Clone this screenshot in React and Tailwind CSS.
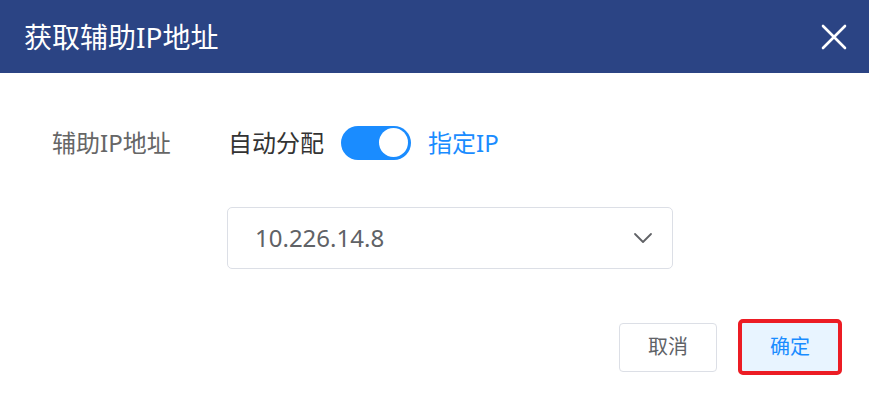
import { useState } from 'react';

const font = { fontFamily: '"Noto Sans", "Noto Sans CJK SC", sans-serif' };

export default function App() {
  const [manual, setManual] = useState(true);

  return (
    <div className="h-[404px] w-[869px] bg-white" style={font}>
      <header className="flex h-[73px] items-center justify-between bg-[#2b4484] pl-6 pr-[19px]">
        <h1 className="text-[28px] font-normal leading-none text-white">获取辅助IP地址</h1>
        <button className="flex h-8 w-8 items-center justify-center text-white">
          <svg width="26" height="26" viewBox="0 0 26 26" fill="none" stroke="currentColor" strokeWidth="2.6" strokeLinecap="round">
            <path d="M2 2 L24 24 M24 2 L2 24" />
          </svg>
        </button>
      </header>

      <div className="pl-[52px] pt-[52px]">
        <div className="flex h-[35px] items-center">
          <span className="w-[176px] text-[24px] text-[#666]">辅助IP地址</span>
          <span className="text-[24px] text-[#333]">自动分配</span>
          <button
            onClick={() => setManual(!manual)}
            className={`ml-[17px] flex h-[34px] w-[70px] items-center rounded-full px-[3px] ${manual ? 'justify-end bg-[#1a8cff]' : 'justify-start bg-[#c0c4cc]'}`}
          >
            <span className="h-[29px] w-[29px] rounded-full bg-white" />
          </button>
          <span className="ml-[17px] text-[24px] text-[#1a8cff]">指定IP</span>
        </div>

        <div className="mt-[47px] flex h-[62px] w-[446px] items-center justify-between rounded-[5px] border border-[#dcdfe6] pl-[27px] pr-[19px] ml-[175px]">
          <span className="text-[24px] text-[#606266]">10.226.14.8</span>
          <svg width="20" height="12" viewBox="0 0 20 12" fill="none" stroke="#606266" strokeWidth="1.8" strokeLinecap="round" strokeLinejoin="round">
            <path d="M2 2 L10 10 L18 2" />
          </svg>
        </div>
      </div>

      <div className="mt-[52px] flex h-[52px] items-center justify-end gap-6 pr-[30px]">
        <button className="h-[49px] w-[98px] rounded-[4px] border border-[#dcdfe6] bg-white text-[20px] text-[#606266]">取消</button>
        <button className="h-[50px] w-[98px] rounded-[2px] bg-[#e8f4ff] text-[20px] text-[#1a8cff] outline outline-[4px] -outline-offset-1 outline-[#ec1c24]">确定</button>
      </div>
    </div>
  );
}
